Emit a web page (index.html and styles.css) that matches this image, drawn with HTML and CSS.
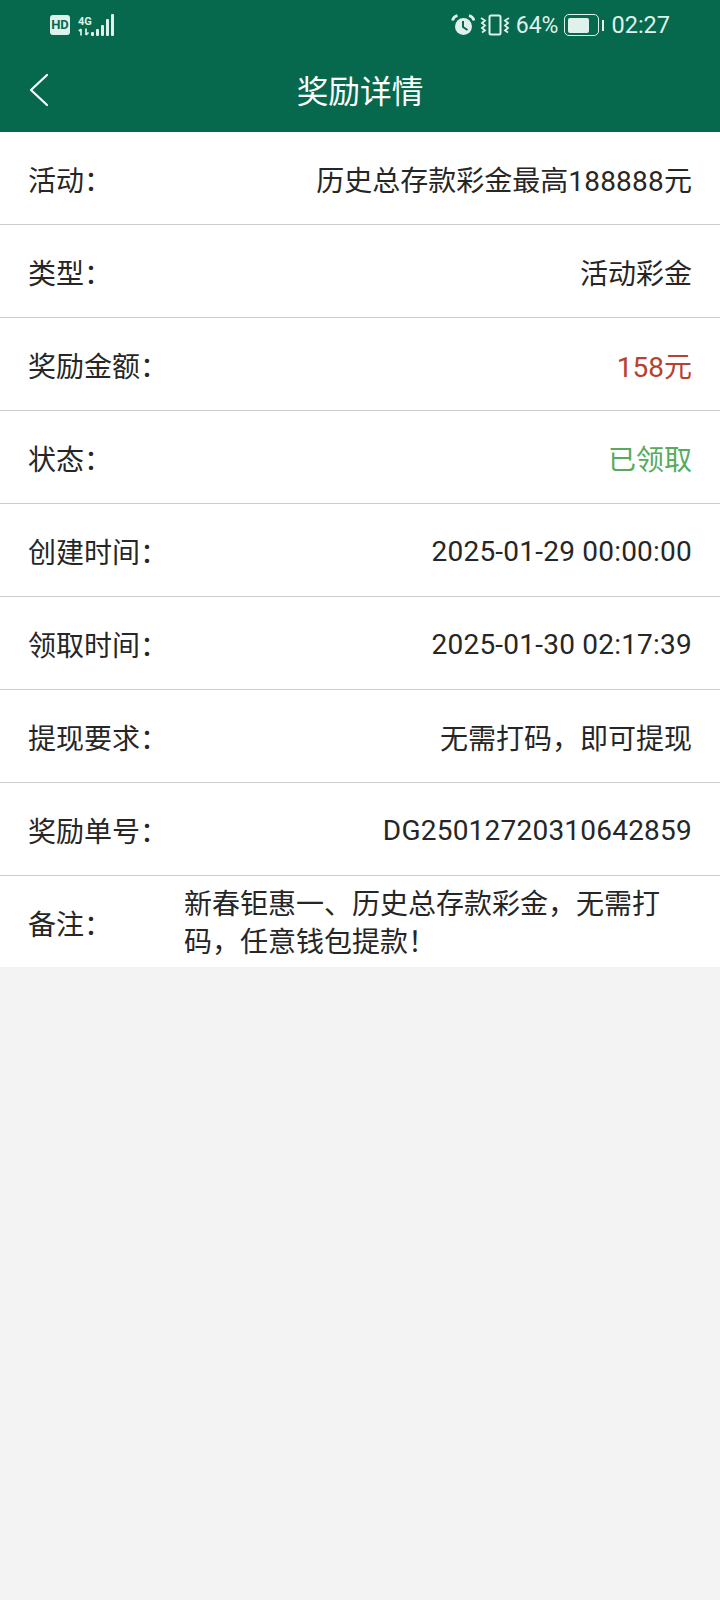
FILE: index.html
```html
<!DOCTYPE html>
<html lang="zh-CN">

<head>
    <meta charset="UTF-8">
    <meta name="viewport" content="width=device-width, initial-scale=1.0">
    <title>奖励详情</title>
    <link rel="stylesheet" href="styles.css">
</head>

<body>
    <header class="header">
        <div class="status-bar">
            <div class="status-left">
                <span class="hd-badge">HD</span>
                <div class="network">
                    <span class="network-label">4G</span>
                    <svg class="network-arrows" width="13" height="8" viewBox="0 0 13 8">
                        <path d="M3 7.500V1M.8 3.200L3 1M8 .5V7M8 7l2.500-2.500" fill="none" stroke="#dff1ea" stroke-width="1.700"/>
                    </svg>
                </div>
                <svg class="signal" width="24" height="23" viewBox="0 0 24 23">
                    <rect x="0" y="18" width="3" height="4" rx="1"/>
                    <rect x="5" y="15" width="3" height="7" rx="1"/>
                    <rect x="10" y="11" width="3" height="11" rx="1"/>
                    <rect x="15" y="5" width="3" height="17" rx="1"/>
                    <rect x="20" y="0" width="3" height="22" rx="1"/>
                </svg>
            </div>
            <div class="status-right">
                <svg class="alarm" width="24" height="22" viewBox="0 0 24 22">
                    <circle cx="12.500" cy="12.500" r="8.500" fill="#dff1ea"/>
                    <path d="M12 7v6l4.500 3" fill="none" stroke="#06694e" stroke-width="2"/>
                    <path d="M1.500 6.500Q2.500 2.500 6.500 1.500M23 6.500Q22 2.500 18 1.500" fill="none" stroke="#dff1ea" stroke-width="2.800"/>
                </svg>
                <svg class="vibrate" width="30" height="22" viewBox="0 0 30 22">
                    <rect x="9.500" y="1.500" width="11" height="19" rx="1.500" fill="none" stroke="#dff1ea" stroke-width="2"/>
                    <path d="M1 4l4 2.500-3 2.500 3 2.500-3 2.500 3 2.500-3 2M29 4l-4 2.500 3 2.500-3 2.500 3 2.500-3 2.500 3 2" fill="none" stroke="#dff1ea" stroke-width="1.800"/>
                </svg>
                <span class="battery-text">64%</span>
                <div class="battery">
                    <div class="battery-body"><div class="battery-fill"></div></div>
                    <div class="battery-cap"></div>
                </div>
                <span class="clock">02:27</span>
            </div>
        </div>
        <div class="title-bar">
            <svg class="back-icon" width="20" height="34" viewBox="0 0 20 34">
                <path d="M18 2L2 17l16 15" fill="none" stroke="#fff" stroke-width="2.200" stroke-linecap="round" stroke-linejoin="round"/>
            </svg>
            <h1>奖励详情</h1>
        </div>
    </header>

    <div class="detail-list">
        <div class="detail-row">
            <span class="detail-label">活动：</span>
            <span class="detail-value">历史总存款彩金最高<span class="number">188888</span>元</span>
        </div>
        <div class="detail-row">
            <span class="detail-label">类型：</span>
            <span class="detail-value">活动彩金</span>
        </div>
        <div class="detail-row">
            <span class="detail-label">奖励金额：</span>
            <span class="detail-value amount">158元</span>
        </div>
        <div class="detail-row">
            <span class="detail-label">状态：</span>
            <span class="detail-value received">已领取</span>
        </div>
        <div class="detail-row">
            <span class="detail-label">创建时间：</span>
            <span class="detail-value number">2025-01-29 00:00:00</span>
        </div>
        <div class="detail-row">
            <span class="detail-label">领取时间：</span>
            <span class="detail-value number">2025-01-30 02:17:39</span>
        </div>
        <div class="detail-row">
            <span class="detail-label">提现要求：</span>
            <span class="detail-value">无需打码，即可提现</span>
        </div>
        <div class="detail-row">
            <span class="detail-label">奖励单号：</span>
            <span class="detail-value number">DG25012720310642859</span>
        </div>
        <div class="detail-row remark-row">
            <span class="detail-label">备注：</span>
            <span class="remark-text">新春钜惠一、历史总存款彩金，无需打码，任意钱包提款！</span>
        </div>
    </div>
</body>

</html>
```

FILE: styles.css
```css
body {
    font-family: Roboto, "Noto Sans CJK SC", sans-serif;
    margin: 0;
    padding: 0;
    background-color: #f3f3f3;
    color: #262626;
}

.header {
    height: 132px;
    background-color: #06694e;
    display: flex;
    flex-direction: column;
}

.status-bar {
    height: 50px;
    display: flex;
    justify-content: space-between;
    align-items: center;
    padding: 0 50px;
    color: #dff1ea;
}

.status-left,
.status-right {
    display: flex;
    align-items: center;
}

.hd-badge {
    width: 20px;
    height: 20px;
    border-radius: 3px;
    background-color: #dff1ea;
    color: #06694e;
    font-size: 13px;
    font-weight: 700;
    line-height: 20px;
    text-align: center;
}

.network {
    display: flex;
    flex-direction: column;
    margin-left: 8px;
    width: 13px;
}

.network-label {
    font-size: 11px;
    font-weight: 700;
    line-height: 13px;
}

.network-arrows {
    display: block;
}

.signal {
    fill: #dff1ea;
}

.alarm {
    margin-right: 5px;
}

.battery-text {
    font-size: 23px;
    margin-left: 6px;
}

.battery {
    display: flex;
    align-items: center;
    margin-left: 6px;
}

.battery-body {
    width: 35px;
    height: 22px;
    border: 1.500px solid #dff1ea;
    border-radius: 5px;
    padding: 2.500px;
    box-sizing: border-box;
}

.battery-fill {
    width: 76%;
    height: 100%;
    border-radius: 2px;
    background-color: #dff1ea;
}

.battery-cap {
    width: 2px;
    height: 11px;
    margin-left: 3px;
    background-color: #dff1ea;
}

.clock {
    font-size: 23.500px;
    margin-left: 7px;
}

.title-bar {
    flex: 1;
    display: flex;
    justify-content: center;
    align-items: center;
    padding-bottom: 4px;
    position: relative;
}

.title-bar h1 {
    margin: 0;
    font-size: 31.700px;
    font-weight: 400;
    color: #fff;
}

.back-icon {
    position: absolute;
    left: 29px;
    top: 23px;
}

.detail-list {
    background-color: #fff;
}

.detail-row {
    height: 93px;
    box-sizing: border-box;
    display: flex;
    justify-content: space-between;
    align-items: center;
    padding: 2px 28px 0;
    border-bottom: 1px solid #ccc;
    font-size: 28px;
}

.remark-row {
    height: 91px;
    justify-content: flex-start;
    border-bottom: none;
}

.detail-label {
    flex-shrink: 0;
}

.number {
    letter-spacing: 0.220px;
}

.amount {
    color: #b8402f;
}

.received {
    color: #56ab5c;
}

.remark-text {
    margin-left: 72px;
    padding-top: 2px;
    line-height: 38px;
}
```
